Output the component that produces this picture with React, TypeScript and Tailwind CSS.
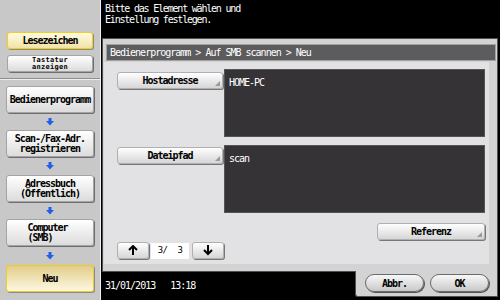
import React from "react";

function DownArrow() {
  return (
    <svg width="8" height="8" viewBox="0 0 8 8">
      <rect x="2.5" y="0" width="3" height="3.5" fill="#1f5fe8" />
      <polygon points="0,3 8,3 4,7.5" fill="#1f5fe8" />
    </svg>
  );
}

function SideBtn({ children, yellow }: { children: React.ReactNode; yellow?: boolean }) {
  return (
    <div
      className={
        yellow
          ? "mx-[6px] h-[27px] rounded-[3px] border border-[#f0cc1c] bg-gradient-to-b from-[#e2cd88] to-[#fdf8e2] flex items-center justify-center text-center font-bold text-[10px] leading-[10px] tracking-[-1px] text-black shadow-[1px_1px_0_#8a8a8a]"
          : "mx-[6px] h-[27px] rounded-[3px] border border-[#a4a4a4] bg-gradient-to-b from-[#ffffff] to-[#dcdcdc] flex items-center justify-center text-center font-bold text-[10px] leading-[10px] tracking-[-1px] text-black shadow-[1px_1px_0_#6e6e6e]"
      }
    >
      <span>{children}</span>
    </div>
  );
}

function ArrowRow({ h }: { h: string }) {
  return <div className={`${h} flex items-center justify-center`}><DownArrow /></div>;
}

function Corner() {
  return (
    <svg className="absolute right-[2px] bottom-[2px]" width="5" height="5" viewBox="0 0 5 5">
      <polygon points="5,0 5,5 0,5" fill="#9a9a9a" />
    </svg>
  );
}

function PanelBtn({ label, w }: { label: string; w: string }) {
  return (
    <div
      className={`relative ${w} h-[17px] rounded-[3px] border border-[#b0b0b0] bg-gradient-to-b from-[#ffffff] to-[#d6d6d6] shadow-[1px_1px_0_#777777] flex items-center justify-center font-bold text-[10px] tracking-[-1px] text-black`}
    >
      {label}
      <Corner />
    </div>
  );
}

export default function App() {
  return (
    <div className="w-[500px] h-[300px] flex bg-black overflow-hidden font-['DejaVu_Sans_Mono',monospace]">
      {/* Sidebar */}
      <div className="w-[101px] shrink-0 bg-[#c8c8c8] border-r border-[#eeeeee] flex flex-col">
        <div className="h-[79px] pt-[32px] px-[7px] flex flex-col gap-[6px] border-b border-[#8e8e8e]">
          <div className="h-[17px] rounded-[3px] border border-[#f2d01a] bg-gradient-to-b from-[#fffbe4] to-[#f2e3a4] shadow-[1px_1px_0_#8a8a8a] flex items-center justify-center font-bold text-[10px] tracking-[-1px] text-black">
            Lesezeichen
          </div>
          <div className="h-[17px] rounded-[3px] border border-[#a4a4a4] bg-gradient-to-b from-[#ffffff] to-[#dcdcdc] shadow-[1px_1px_0_#6e6e6e] flex flex-col items-center justify-center font-bold text-[7px] leading-[7px] tracking-[0.3px] text-black">
            <span className="block h-[7px]">Tastatur</span>
            <span className="block h-[7px]">anzeigen</span>
          </div>
        </div>
        <div className="flex-1 border-t border-[#eeeeee] pt-[6px] flex flex-col">
          <SideBtn>Bedienerprogramm</SideBtn>
          <ArrowRow h="h-[17px]" />
          <SideBtn>
            Scan-/Fax-Adr.
            <br />
            registrieren
          </SideBtn>
          <ArrowRow h="h-[18px]" />
          <SideBtn>
            Adressbuch
            <br />
            (Öffentlich)
          </SideBtn>
          <ArrowRow h="h-[17px]" />
          <SideBtn>
            Computer&nbsp;
            <br />
            (SMB)&nbsp;&nbsp;&nbsp;&nbsp;
          </SideBtn>
          <ArrowRow h="h-[19px]" />
          <SideBtn yellow>Neu</SideBtn>
        </div>
      </div>

      {/* Main */}
      <div className="flex-1 flex flex-col">
        <div className="h-[38px] pl-[4px] pt-[3px] text-white text-[10px] leading-[11px] tracking-[-1.2px]">
          Bitte das Element wählen und
          <br />
          Einstellung festlegen.
        </div>

        <div className="h-[234px] ml-[1px] mr-[2px] bg-[#d3d3d3] border border-[#505050] pt-[5px] pb-[7px] flex flex-col">
          <div className="h-[17px] ml-[3px] mr-[1px] bg-[#5c5b5d] border border-[#a2a2a2] pl-[3px] flex items-center text-white text-[10px] tracking-[-1px]">
            Bedienerprogramm &gt; Auf SMB scannen &gt; Neu
          </div>
          <div className="flex-1 mt-[1px] flex">
            <div className="flex-1 ml-[1px] bg-[#e2e1e3] pl-[13px] pr-[4px] pt-[7px] flex flex-col">
              <div className="flex items-start">
                <div className="mt-[3px]">
                  <PanelBtn label="Hostadresse" w="w-[106px]" />
                </div>
                <div className="ml-[1px] flex-1 h-[68px] bg-[#353336] border border-[#555555] px-[4px] pt-[5px] text-white text-[10px] tracking-[-1px]">
                  HOME-PC
                </div>
              </div>
              <div className="mt-[8px] flex items-start">
                <div className="mt-[2px]">
                  <PanelBtn label="Dateipfad" w="w-[106px]" />
                </div>
                <div className="ml-[1px] flex-1 h-[68px] bg-[#353336] border border-[#555555] px-[4px] pt-[5px] text-white text-[10px] tracking-[-1px]">
                  scan
                </div>
              </div>
              <div className="mt-[10px] flex justify-end">
                <PanelBtn label="Referenz" w="w-[108px]" />
              </div>
              <div className="mt-[2px] flex items-center">
                <div className="w-[32px] h-[17px] rounded-[3px] border border-[#b0b0b0] bg-gradient-to-b from-[#ffffff] to-[#d6d6d6] shadow-[1px_1px_0_#777777] flex items-center justify-center">
                  <svg width="10" height="11" viewBox="0 0 10 11">
                    <path d="M5 1 L5 10 M1 5 L5 1 L9 5" stroke="#000" strokeWidth="2" fill="none" />
                  </svg>
                </div>
                <div className="ml-[2px] w-[38px] h-[16px] bg-white flex items-center justify-center text-[9px] tracking-[-0.5px] text-black whitespace-pre">
                  3/  3
                </div>
                <div className="ml-[3px] w-[32px] h-[17px] rounded-[3px] border border-[#b0b0b0] bg-gradient-to-b from-[#ffffff] to-[#d6d6d6] shadow-[1px_1px_0_#777777] flex items-center justify-center">
                  <svg width="10" height="11" viewBox="0 0 10 11">
                    <path d="M5 0 L5 9 M1 5 L5 9 L9 5" stroke="#000" strokeWidth="2" fill="none" />
                  </svg>
                </div>
              </div>
            </div>
            <div className="w-[8px]" />
          </div>
        </div>

        <div className="flex-1 flex">
          <div className="flex-1 pl-[4px] pt-[9px] text-white text-[10px] leading-[10px] tracking-[-1px] whitespace-pre">
            31/01/2013   13:18
          </div>
          <div className="relative -mt-[1px] mr-[2px] mb-[3px] w-[143px] bg-[#d3d3d3] border-x border-b border-[#505050] rounded-bl-[3px] pl-[9px] pt-[3px] flex gap-[6px]">
            <div className="w-[59px] h-[18px] rounded-[9px] border border-[#6a6a6a] bg-gradient-to-b from-[#f8f8f8] to-[#c9c9c9] shadow-[1px_1px_0_#555555] flex items-center justify-center font-bold text-[10px] tracking-[-1px] text-black">
              Abbr.
            </div>
            <div className="w-[59px] h-[18px] rounded-[9px] border border-[#6a6a6a] bg-gradient-to-b from-[#f8f8f8] to-[#c9c9c9] shadow-[1px_1px_0_#555555] flex items-center justify-center font-bold text-[10px] tracking-[-1px] text-black">
              OK
            </div>
          </div>
        </div>
      </div>
    </div>
  );
}
